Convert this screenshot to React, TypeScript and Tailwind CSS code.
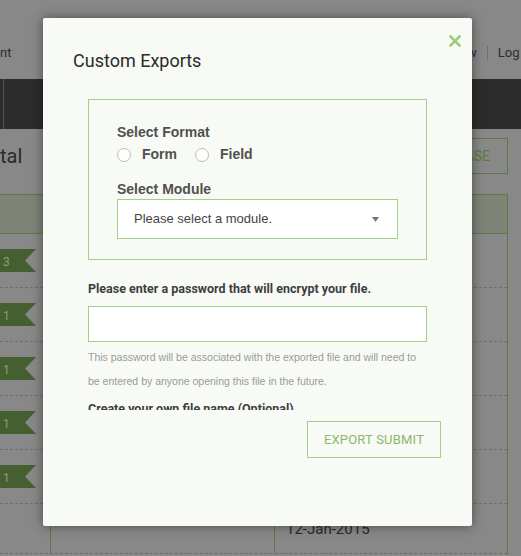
const rows = ['3', '1', '1', '1', '1'];

const Ribbon = ({ n }: { n: string }) => (
  <div className="relative h-[23px] w-[36px]">
    <svg width="36" height="23" viewBox="0 0 36 23" className="absolute inset-0">
      <polygon points="0,0 36,0 25,11.5 36,23 0,23" fill="#465f30" />
    </svg>
    <span className="relative pl-[3px] text-[12px] leading-[23px] text-[#8d9c80]">{n}</span>
  </div>
);

const Background = () => (
  <div className="flex flex-col font-['Roboto',sans-serif]">
    <div className="h-[79px] flex items-start justify-between text-[13px] text-[#2e2e2e] pt-[44px]">
      <span className="leading-[18px]">nt</span>
      <div className="flex items-center gap-[10px] w-[54px] leading-[18px]">
        <span>w</span>
        <span className="h-[14px] w-px bg-[#6f6f6f]" />
        <span>Log</span>
      </div>
    </div>
    <div className="h-[50px] bg-[#2c2c2c] flex">
      <div className="w-[4px] border-r border-[#555]" />
    </div>
    <div className="h-[65px] flex items-start justify-between pt-[9px] pr-[13px]">
      <span className="text-[20px] text-[#2a2a2a] leading-[36px]">tal</span>
      <div className="w-[100px] h-[36px] border border-[#5d7a41] text-[#5d7a41] text-[14px] flex items-center justify-end pr-[17px]">
        RELEASE
      </div>
    </div>
    <div className="w-[508px] border-r border-[#5d7a41]">
      <div className="h-[40px] bg-[#7e8378] border-y border-[#5d7a41]" />
      {rows.map((n, i) => (
        <div key={i} className="h-[54px] border-b border-dashed border-[#6e6e6e] pt-[15px]">
          <Ribbon n={n} />
        </div>
      ))}
      <div className="h-[50px] border-b border-dashed border-[#6e6e6e] flex">
        <div className="w-[51px] border-r border-[#5d7a41]" />
        <div className="w-[224px] border-r border-[#5d7a41]" />
        <div className="pl-[11px] pt-[14px] text-[15px] text-[#2a2a2a]">12-Jan-2015</div>
      </div>
    </div>
  </div>
);

const Radio = ({ label }: { label: string }) => (
  <label className="flex items-center gap-[11px]">
    <span className="w-[14px] h-[14px] rounded-full border border-[#bdbdbd] bg-white" />
    <span className="text-[14px] font-bold text-[#505050]">{label}</span>
  </label>
);

export default function App() {
  return (
    <div className="relative w-[521px] h-[556px] overflow-hidden bg-[#888888]">
      <Background />

      <div className="absolute left-[43px] top-[18px] w-[429px] h-[508px] bg-[#f8faf5] rounded-[2px] shadow-[0_0_12px_rgba(0,0,0,0.45)] flex flex-col">
        <div className="flex items-start justify-between pl-[30px] pr-[11px]">
          <h2 className="pt-[32px] text-[18px] leading-[22px] text-[#2b2b2b] font-['Roboto',sans-serif]">
            Custom Exports
          </h2>
          <button className="pt-[17px] text-[#9dcc7d]">
            <svg width="12" height="12" viewBox="0 0 12 12">
              <path d="M1.5 1.5 L10.5 10.5 M10.5 1.5 L1.5 10.5" stroke="currentColor" strokeWidth="2.6" strokeLinecap="square" />
            </svg>
          </button>
        </div>

        <div className="mt-[27px] mx-[45px] h-[311px] overflow-hidden">
          <div className="border border-[#a3d083] pl-[28px] pr-[28px] pt-[22px] pb-[20px] font-['Liberation_Sans',Arial,sans-serif]">
            <div className="text-[14px] font-bold text-[#505050] leading-[20px]">Select Format</div>
            <div className="flex items-center gap-[18px] mt-[2px]">
              <Radio label="Form" />
              <Radio label="Field" />
            </div>
            <div className="mt-[14px] text-[14px] font-bold text-[#505050] leading-[20px]">Select Module</div>
            <div className="h-[40px] bg-white border border-[#a3d083] flex items-center justify-between pl-[16px] pr-[18px]">
              <span className="text-[13px] text-[#444]">Please select a module.</span>
              <svg width="7" height="5" viewBox="0 0 7 5">
                <polygon points="0,0 7,0 3.5,5" fill="#777" />
              </svg>
            </div>
          </div>

          <div className="mt-[19px] text-[12.5px] font-bold text-[#3e3e3e] leading-[20px] font-['Roboto',sans-serif]">
            Please enter a password that will encrypt your file.
          </div>
          <input className="mt-[7px] block w-full h-[36px] bg-white border border-[#a3d083] outline-none" />
          <p className="mt-[3px] text-[10.5px] leading-[24px] text-[#9a9a9a] font-['Liberation_Sans',Arial,sans-serif]">
            This password will be associated with the exported file and will need to be entered by anyone opening this file in the future.
          </p>
          <div className="mt-[6px] text-[12.5px] font-bold text-[#3e3e3e] leading-[20px] font-['Roboto',sans-serif]">
            Create your own file name (Optional)
          </div>
        </div>

        <div className="flex justify-end pr-[31px] mt-[11px]">
          <button className="w-[134px] h-[37px] border border-[#a3d083] text-[13px] text-[#8bb86b] font-['Roboto',sans-serif] tracking-[0.2px]">
            EXPORT SUBMIT
          </button>
        </div>
      </div>
    </div>
  );
}
